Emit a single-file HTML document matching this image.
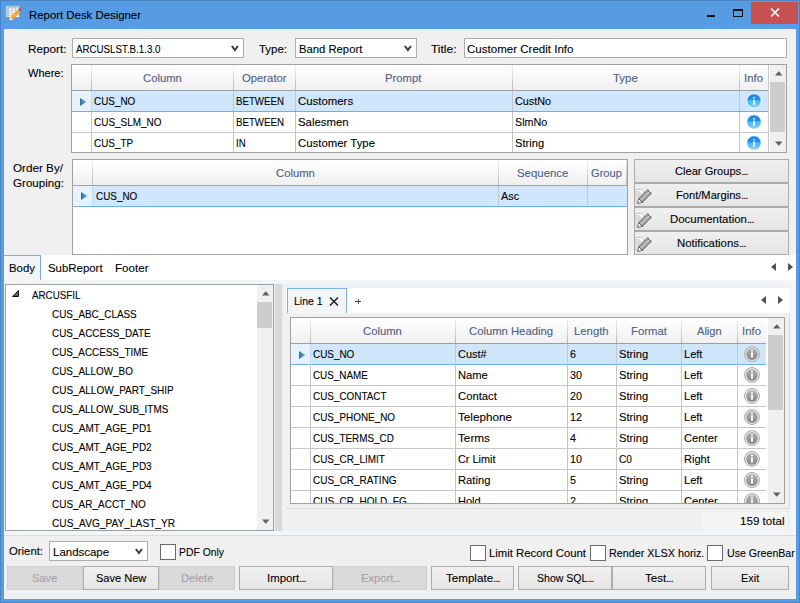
<!DOCTYPE html><html><head><meta charset='utf-8'><style>
html,body{margin:0;padding:0;width:800px;height:603px;overflow:hidden;background:#579ce3}
body div{position:absolute}
svg{position:absolute}
.t{position:absolute;white-space:nowrap;font-family:'Liberation Sans', sans-serif;font-size:11.5px;line-height:12px;transform-origin:0 0;-webkit-text-stroke:0.1px currentColor}
</style></head><body><div style='left:0;top:0;width:800px;height:603px;overflow:hidden'><div style="left:0px;top:0px;width:800px;height:603px;background:#579ce3"></div>
<div style="left:0px;top:0px;width:800px;height:1px;background:#4a86c4"></div>
<div style="left:0px;top:0px;width:1px;height:603px;background:#4a86c4"></div>
<div style="left:799px;top:0px;width:1px;height:603px;background:#4a86c4"></div>
<div style="left:0px;top:602px;width:800px;height:1px;background:#4a86c4"></div>
<div style="left:4px;top:29px;width:792px;height:570px;background:#f0f0f0"></div>
<svg style="position:absolute;left:0px;top:0px" width="24" height="24" viewBox="0 0 24 24">
<rect x="5.5" y="5.5" width="14" height="12" fill="#fff" stroke="#9c9c9c" stroke-width="1"/>
<rect x="6" y="6" width="13" height="1.8" fill="#9fd3f0"/>
<rect x="6" y="6" width="2.2" height="11" fill="#a9d8f2"/>
<path d="M8.5 5.5v12M12 5.5v12M15.5 5.5v12M5.5 8.2h14M5.5 10.6h14M5.5 13h14M5.5 15.4h14" stroke="#b0b0b0" stroke-width="0.6"/>
<path d="M10.2 17.3 L18.2 9.3 L20.6 11.7 L12.6 19.7 Z" fill="#f7a928"/>
<path d="M18.2 9.3 L19.2 8.3 L21.6 10.7 L20.6 11.7 Z" fill="#2f7fc8"/>
<path d="M19.2 8.3 L20.1 7.4 L22.5 9.8 L21.6 10.7 Z" fill="#e0533b"/>
<path d="M10.2 17.3 L12.6 19.7 L9 21 Z" fill="#fff"/>
<path d="M9 21 L9.6 19.4 L10.6 20.4 Z" fill="#777"/>
</svg>
<span id="t0" class="t" style="left:28.50px;transform:scaleX(0.9899);top:9.0px;color:#000;">Report Desk Designer</span>
<div style="left:707px;top:15px;width:8px;height:2px;background:#111"></div>
<div style="left:733px;top:9px;width:10px;height:8px;border:1px solid #111;border-top-width:2px;box-sizing:border-box"></div>
<div style="left:751px;top:2px;width:47px;height:22px;background:#c75050"></div>
<svg style="position:absolute;left:770px;top:8px" width="10" height="9" viewBox="0 0 10 9"><path d="M1 0.5 L9 8.5 M9 0.5 L1 8.5" stroke="#fff" stroke-width="1.6"/></svg>
<span id="t1" class="t" style="left:27.50px;transform:scaleX(1.0207);top:43.0px;color:#000;">Report:</span>
<div style="left:72px;top:38px;width:172px;height:20px;background:#fff;border:1px solid #acacac;box-sizing:border-box"></div>
<span id="t2" class="t" style="left:75.50px;transform:scaleX(0.8474);top:43.0px;color:#000;">ARCUSLST.B.1.3.0</span>
<svg style="position:absolute;left:231px;top:45px" width="8" height="7" viewBox="0 0 8 7"><path d="M0.9 1 L3.9 5 L6.9 1" stroke="#3a3a3a" stroke-width="2" fill="none" stroke-linejoin="miter"/></svg>
<span id="t3" class="t" style="left:258.50px;transform:scaleX(0.9950);top:43.0px;color:#000;">Type:</span>
<div style="left:295px;top:38px;width:122px;height:20px;background:#fff;border:1px solid #acacac;box-sizing:border-box"></div>
<span id="t4" class="t" style="left:298.50px;transform:scaleX(0.9802);top:43.0px;color:#000;">Band Report</span>
<svg style="position:absolute;left:404px;top:45px" width="8" height="7" viewBox="0 0 8 7"><path d="M0.9 1 L3.9 5 L6.9 1" stroke="#3a3a3a" stroke-width="2" fill="none" stroke-linejoin="miter"/></svg>
<span id="t5" class="t" style="left:430.50px;transform:scaleX(1.0408);top:43.0px;color:#000;">Title:</span>
<div style="left:464px;top:38px;width:323px;height:20px;background:#fff;border:1px solid #acacac;box-sizing:border-box"></div>
<span id="t6" class="t" style="left:466.50px;transform:scaleX(1.0037);top:43.0px;color:#000;">Customer Credit Info</span>
<span id="t7" class="t" style="left:27.50px;transform:scaleX(0.9590);top:67.0px;color:#000;">Where:</span>
<div style="left:71px;top:64px;width:716px;height:89px;background:#fff;border:1px solid #a0a0a0;box-sizing:border-box"></div>
<div style="left:72px;top:65px;width:697px;height:25px;background:linear-gradient(#ffffff,#f0f0f0)"></div>
<div style="left:72px;top:90px;width:697px;height:1px;background:#a0a0a0"></div>
<div style="left:91px;top:65px;width:1px;height:25px;background:linear-gradient(#f4f4f4,#b8b8b8)"></div>
<div style="left:233px;top:65px;width:1px;height:25px;background:linear-gradient(#f4f4f4,#b8b8b8)"></div>
<div style="left:295px;top:65px;width:1px;height:25px;background:linear-gradient(#f4f4f4,#b8b8b8)"></div>
<div style="left:512px;top:65px;width:1px;height:25px;background:linear-gradient(#f4f4f4,#b8b8b8)"></div>
<div style="left:739px;top:65px;width:1px;height:25px;background:linear-gradient(#f4f4f4,#b8b8b8)"></div>
<div style="left:768px;top:65px;width:1px;height:25px;background:linear-gradient(#f4f4f4,#b8b8b8)"></div>
<span id="t8" class="t" style="left:142.57px;transform:scaleX(0.9803);top:72px;color:#4d6082;-webkit-text-stroke:0.1px #4d6082">Column</span>
<span id="t9" class="t" style="left:241.70px;transform:scaleX(0.9827);top:72px;color:#4d6082;-webkit-text-stroke:0.1px #4d6082">Operator</span>
<span id="t10" class="t" style="left:385.32px;transform:scaleX(0.9808);top:72px;color:#4d6082;-webkit-text-stroke:0.1px #4d6082">Prompt</span>
<span id="t11" class="t" style="left:613.11px;transform:scaleX(0.9937);top:72px;color:#4d6082;-webkit-text-stroke:0.1px #4d6082">Type</span>
<span id="t12" class="t" style="left:744.02px;transform:scaleX(0.9879);top:72px;color:#4d6082;-webkit-text-stroke:0.1px #4d6082">Info</span>
<div style="left:72px;top:91px;width:19px;height:20px;background:#e6f3fc"></div>
<div style="left:92px;top:91px;width:676px;height:20px;background:#cfe6fc"></div>
<div style="left:72px;top:111px;width:696px;height:1px;background:#6fb0ea"></div>
<svg style="position:absolute;left:80px;top:98px" width="7" height="8" viewBox="0 0 7 8"><defs><linearGradient id="tg8098" x1="0" x2="1"><stop offset="0" stop-color="#2a6f9e"/><stop offset="1" stop-color="#6ab8e4"/></linearGradient></defs><path d="M0 0 L6.5 4 L0 8 Z" fill="url(#tg8098)"/></svg>
<div style="left:91px;top:91px;width:1px;height:20px;background:#c5ddf0"></div>
<div style="left:233px;top:91px;width:1px;height:20px;background:#c6c6c6"></div>
<div style="left:295px;top:91px;width:1px;height:20px;background:#c6c6c6"></div>
<div style="left:512px;top:91px;width:1px;height:20px;background:#c6c6c6"></div>
<div style="left:739px;top:91px;width:1px;height:20px;background:#c6c6c6"></div>
<span id="t13" class="t" style="left:93.50px;transform:scaleX(0.8610);top:95.0px;color:#000;">CUS_NO</span>
<span id="t14" class="t" style="left:235.50px;transform:scaleX(0.8419);top:95.0px;color:#000;">BETWEEN</span>
<span id="t15" class="t" style="left:297.50px;transform:scaleX(0.9910);top:95.0px;color:#000;">Customers</span>
<span id="t16" class="t" style="left:514.50px;transform:scaleX(0.9411);top:95.0px;color:#000;">CustNo</span>
<svg style="position:absolute;left:746px;top:93px" width="16" height="16" viewBox="0 0 16 16"><defs><linearGradient id="ib101" x1="0" y1="0" x2="0" y2="1"><stop offset="0" stop-color="#1b80ec"/><stop offset="0.4" stop-color="#2590f2"/><stop offset="0.5" stop-color="#3ec2ff"/><stop offset="0.7" stop-color="#62bff8"/><stop offset="1" stop-color="#a6d2f6"/></linearGradient></defs>
<circle cx="8" cy="8" r="7.3" fill="url(#ib101)" stroke="#fff" stroke-width="0.9"/>
<rect x="7.2" y="4" width="1.6" height="1.5" fill="#fff"/><rect x="7.2" y="6.6" width="1.6" height="5.2" fill="#fff"/></svg>
<div style="left:72px;top:132px;width:696px;height:1px;background:#c6c6c6"></div>
<div style="left:91px;top:112px;width:1px;height:21px;background:#c6c6c6"></div>
<div style="left:233px;top:112px;width:1px;height:21px;background:#c6c6c6"></div>
<div style="left:295px;top:112px;width:1px;height:21px;background:#c6c6c6"></div>
<div style="left:512px;top:112px;width:1px;height:21px;background:#c6c6c6"></div>
<div style="left:739px;top:112px;width:1px;height:21px;background:#c6c6c6"></div>
<span id="t17" class="t" style="left:93.50px;transform:scaleX(0.8655);top:116.0px;color:#000;">CUS_SLM_NO</span>
<span id="t18" class="t" style="left:235.50px;transform:scaleX(0.8419);top:116.0px;color:#000;">BETWEEN</span>
<span id="t19" class="t" style="left:297.50px;transform:scaleX(0.9910);top:116.0px;color:#000;">Salesmen</span>
<span id="t20" class="t" style="left:514.50px;transform:scaleX(0.9360);top:116.0px;color:#000;">SlmNo</span>
<svg style="position:absolute;left:746px;top:114px" width="16" height="16" viewBox="0 0 16 16"><defs><linearGradient id="ib122" x1="0" y1="0" x2="0" y2="1"><stop offset="0" stop-color="#1b80ec"/><stop offset="0.4" stop-color="#2590f2"/><stop offset="0.5" stop-color="#3ec2ff"/><stop offset="0.7" stop-color="#62bff8"/><stop offset="1" stop-color="#a6d2f6"/></linearGradient></defs>
<circle cx="8" cy="8" r="7.3" fill="url(#ib122)" stroke="#fff" stroke-width="0.9"/>
<rect x="7.2" y="4" width="1.6" height="1.5" fill="#fff"/><rect x="7.2" y="6.6" width="1.6" height="5.2" fill="#fff"/></svg>
<div style="left:91px;top:133px;width:1px;height:19px;background:#c6c6c6"></div>
<div style="left:233px;top:133px;width:1px;height:19px;background:#c6c6c6"></div>
<div style="left:295px;top:133px;width:1px;height:19px;background:#c6c6c6"></div>
<div style="left:512px;top:133px;width:1px;height:19px;background:#c6c6c6"></div>
<div style="left:739px;top:133px;width:1px;height:19px;background:#c6c6c6"></div>
<span id="t21" class="t" style="left:93.50px;transform:scaleX(0.8622);top:137.0px;color:#000;">CUS_TP</span>
<span id="t22" class="t" style="left:235.50px;transform:scaleX(0.8421);top:137.0px;color:#000;">IN</span>
<span id="t23" class="t" style="left:297.50px;transform:scaleX(0.9906);top:137.0px;color:#000;">Customer Type</span>
<span id="t24" class="t" style="left:514.50px;transform:scaleX(0.9725);top:137.0px;color:#000;">String</span>
<svg style="position:absolute;left:746px;top:135px" width="16" height="16" viewBox="0 0 16 16"><defs><linearGradient id="ib143" x1="0" y1="0" x2="0" y2="1"><stop offset="0" stop-color="#1b80ec"/><stop offset="0.4" stop-color="#2590f2"/><stop offset="0.5" stop-color="#3ec2ff"/><stop offset="0.7" stop-color="#62bff8"/><stop offset="1" stop-color="#a6d2f6"/></linearGradient></defs>
<circle cx="8" cy="8" r="7.3" fill="url(#ib143)" stroke="#fff" stroke-width="0.9"/>
<rect x="7.2" y="4" width="1.6" height="1.5" fill="#fff"/><rect x="7.2" y="6.6" width="1.6" height="5.2" fill="#fff"/></svg>
<div style="left:768px;top:65px;width:1px;height:87px;background:#c8c8c8"></div>
<div style="left:769px;top:65px;width:1px;height:87px;background:#fff"></div>
<div style="left:770px;top:65px;width:16px;height:87px;background:#f0f0f0"></div>
<div style="left:770px;top:82px;width:15px;height:50px;background:#cdcdcd"></div>
<svg style="position:absolute;left:775px;top:71px" width="8" height="5" viewBox="0 0 8 5"><path d="M0 4.5 L3.75 0.3 L7.5 4.5Z" fill="#606060"/></svg>
<svg style="position:absolute;left:775px;top:141px" width="8" height="5" viewBox="0 0 8 5"><path d="M0 0.5 L3.75 4.7 L7.5 0.5Z" fill="#606060"/></svg>
<span id="t25" class="t" style="left:12.50px;transform:scaleX(1.0159);top:162.0px;color:#000;">Order By/</span>
<span id="t26" class="t" style="left:12.50px;transform:scaleX(1.0096);top:177.0px;color:#000;">Grouping:</span>
<div style="left:72px;top:159px;width:556px;height:96px;background:#fff;border:1px solid #a0a0a0;box-sizing:border-box"></div>
<div style="left:73px;top:160px;width:554px;height:25px;background:linear-gradient(#ffffff,#f0f0f0)"></div>
<div style="left:73px;top:185px;width:554px;height:1px;background:#a0a0a0"></div>
<div style="left:92px;top:160px;width:1px;height:25px;background:linear-gradient(#f4f4f4,#b8b8b8)"></div>
<div style="left:498px;top:160px;width:1px;height:25px;background:linear-gradient(#f4f4f4,#b8b8b8)"></div>
<div style="left:587px;top:160px;width:1px;height:25px;background:linear-gradient(#f4f4f4,#b8b8b8)"></div>
<div style="left:626px;top:160px;width:1px;height:25px;background:linear-gradient(#f4f4f4,#b8b8b8)"></div>
<span id="t27" class="t" style="left:275.57px;transform:scaleX(0.9803);top:167px;color:#4d6082;-webkit-text-stroke:0.1px #4d6082">Column</span>
<span id="t28" class="t" style="left:516.82px;transform:scaleX(0.9914);top:167px;color:#4d6082;-webkit-text-stroke:0.1px #4d6082">Sequence</span>
<span id="t29" class="t" style="left:591.03px;transform:scaleX(0.9681);top:167px;color:#4d6082;-webkit-text-stroke:0.1px #4d6082">Group</span>
<div style="left:73px;top:186px;width:19px;height:20px;background:#e6f3fc"></div>
<div style="left:93px;top:186px;width:534px;height:20px;background:#cfe6fc"></div>
<div style="left:73px;top:206px;width:554px;height:1px;background:#6fb0ea"></div>
<div style="left:92px;top:186px;width:1px;height:20px;background:#c5ddf0"></div>
<div style="left:498px;top:186px;width:1px;height:20px;background:#c6c6c6"></div>
<div style="left:587px;top:186px;width:1px;height:20px;background:#c6c6c6"></div>
<svg style="position:absolute;left:81px;top:192px" width="7" height="8" viewBox="0 0 7 8"><defs><linearGradient id="tg81192" x1="0" x2="1"><stop offset="0" stop-color="#2a6f9e"/><stop offset="1" stop-color="#6ab8e4"/></linearGradient></defs><path d="M0 0 L6.5 4 L0 8 Z" fill="url(#tg81192)"/></svg>
<span id="t30" class="t" style="left:95.50px;transform:scaleX(0.8610);top:190.0px;color:#000;">CUS_NO</span>
<span id="t31" class="t" style="left:500.50px;transform:scaleX(0.9472);top:190.0px;color:#000;">Asc</span>
<div style="left:634px;top:159px;width:155px;height:24px;background:linear-gradient(#f0f0f0,#e5e5e5);border:1px solid #acacac;box-sizing:border-box"></div>
<span id="t32" class="t" style="left:675.25px;transform:scaleX(0.9669);top:165px;color:#000">Clear Groups<span style="letter-spacing:-1px">...</span></span>
<div style="left:634px;top:183px;width:155px;height:24px;background:linear-gradient(#f0f0f0,#e5e5e5);border:1px solid #acacac;box-sizing:border-box"></div>
<span id="t33" class="t" style="left:675.84px;transform:scaleX(0.9676);top:189px;color:#000">Font/Margins<span style="letter-spacing:-1px">...</span></span>
<div style="left:634px;top:207px;width:155px;height:24px;background:linear-gradient(#f0f0f0,#e5e5e5);border:1px solid #acacac;box-sizing:border-box"></div>
<span id="t34" class="t" style="left:669.78px;transform:scaleX(0.9939);top:213px;color:#000">Documentation<span style="letter-spacing:-1px">...</span></span>
<div style="left:634px;top:231px;width:155px;height:24px;background:linear-gradient(#f0f0f0,#e5e5e5);border:1px solid #acacac;box-sizing:border-box"></div>
<span id="t35" class="t" style="left:677.26px;transform:scaleX(0.9890);top:237px;color:#000">Notifications<span style="letter-spacing:-1px">...</span></span>
<svg style="position:absolute;left:634px;top:188px" width="18" height="17" viewBox="0 0 18 17">
<path d="M2 1.5h5.5l2.5 2.5v9.5H2z" fill="#fff" stroke="#b4b4b4" stroke-width="0.8"/>
<path d="M3.2 4h3M3.2 6h4.5M3.2 8h3.5M3.2 10h2.5" stroke="#9a9a9a" stroke-width="0.8"/>
<path d="M4.7 10.7 L13.7 1.7 L17.3 5.3 L8.3 14.3 Z" fill="#a8a8a8" stroke="#5a5a5a" stroke-width="1"/>
<path d="M6.5 12.5 L15.5 3.5" stroke="#d4d4d4" stroke-width="1"/>
<path d="M4.7 10.7 L8.3 14.3 L3.6 15.6 Z" fill="#fff" stroke="#5a5a5a" stroke-width="0.9"/>
</svg>
<svg style="position:absolute;left:634px;top:212px" width="18" height="17" viewBox="0 0 18 17">
<path d="M2 1.5h5.5l2.5 2.5v9.5H2z" fill="#fff" stroke="#b4b4b4" stroke-width="0.8"/>
<path d="M3.2 4h3M3.2 6h4.5M3.2 8h3.5M3.2 10h2.5" stroke="#9a9a9a" stroke-width="0.8"/>
<path d="M4.7 10.7 L13.7 1.7 L17.3 5.3 L8.3 14.3 Z" fill="#a8a8a8" stroke="#5a5a5a" stroke-width="1"/>
<path d="M6.5 12.5 L15.5 3.5" stroke="#d4d4d4" stroke-width="1"/>
<path d="M4.7 10.7 L8.3 14.3 L3.6 15.6 Z" fill="#fff" stroke="#5a5a5a" stroke-width="0.9"/>
</svg>
<svg style="position:absolute;left:634px;top:236px" width="18" height="17" viewBox="0 0 18 17">
<path d="M2 1.5h5.5l2.5 2.5v9.5H2z" fill="#fff" stroke="#b4b4b4" stroke-width="0.8"/>
<path d="M3.2 4h3M3.2 6h4.5M3.2 8h3.5M3.2 10h2.5" stroke="#9a9a9a" stroke-width="0.8"/>
<path d="M4.7 10.7 L13.7 1.7 L17.3 5.3 L8.3 14.3 Z" fill="#a8a8a8" stroke="#5a5a5a" stroke-width="1"/>
<path d="M6.5 12.5 L15.5 3.5" stroke="#d4d4d4" stroke-width="1"/>
<path d="M4.7 10.7 L8.3 14.3 L3.6 15.6 Z" fill="#fff" stroke="#5a5a5a" stroke-width="0.9"/>
</svg>
<div style="left:4px;top:255px;width:792px;height:25px;background:#fff"></div>
<div style="left:4px;top:255px;width:37px;height:26px;background:#f4f5f7;border-top:1px solid #78b0e8;border-right:1px solid #78b0e8;box-sizing:border-box"></div>
<span id="t36" class="t" style="left:8.50px;transform:scaleX(0.9917);top:262.0px;color:#000;">Body</span>
<span id="t37" class="t" style="left:47.50px;transform:scaleX(0.9930);top:262.0px;color:#000;">SubReport</span>
<span id="t38" class="t" style="left:114.50px;transform:scaleX(1.0105);top:262.0px;color:#000;">Footer</span>
<svg style="position:absolute;left:771px;top:263px" width="5" height="8" viewBox="0 0 5 8"><path d="M5 0 L0 4 L5 8Z" fill="#505050"/></svg>
<svg style="position:absolute;left:788px;top:263px" width="5" height="8" viewBox="0 0 5 8"><path d="M0 0 L5 4 L0 8Z" fill="#505050"/></svg>
<div style="left:4px;top:531px;width:792px;height:4px;background:#f4f5f7"></div>
<div style="left:4px;top:280px;width:792px;height:4px;background:#f4f5f7"></div>
<div style="left:790px;top:280px;width:6px;height:255px;background:#f4f5f7"></div>
<div style="left:4px;top:280px;width:1px;height:255px;background:#f4f5f7"></div>
<div style="left:4px;top:535px;width:792px;height:1px;background:#dcdcdc"></div>
<div style="left:5px;top:284px;width:269px;height:247px;background:#fff;border:1px solid #a0a0a0;box-sizing:border-box"></div>
<div style="left:256px;top:285px;width:1px;height:245px;background:#fff"></div>
<div style="left:257px;top:285px;width:16px;height:245px;background:#f0f0f0"></div>
<div style="left:257px;top:302px;width:15px;height:26px;background:#cdcdcd"></div>
<svg style="position:absolute;left:262px;top:291px" width="8" height="5" viewBox="0 0 8 5"><path d="M0 4.5 L3.75 0.3 L7.5 4.5Z" fill="#606060"/></svg>
<svg style="position:absolute;left:262px;top:519px" width="8" height="5" viewBox="0 0 8 5"><path d="M0 0.5 L3.75 4.7 L7.5 0.5Z" fill="#606060"/></svg>
<svg style="position:absolute;left:11px;top:289px" width="9" height="9" viewBox="0 0 9 9"><path d="M7.5 1.5 L7.5 7.5 L1.5 7.5Z" fill="#606060" stroke="#111" stroke-width="1" stroke-linejoin="miter"/></svg>
<span id="t39" class="t" style="left:31.50px;transform:scaleX(0.8527);top:289.0px;color:#000;">ARCUSFIL</span>
<span id="t40" class="t" style="left:51.50px;transform:scaleX(0.8606);top:308.0px;color:#000;">CUS_ABC_CLASS</span>
<span id="t41" class="t" style="left:51.50px;transform:scaleX(0.8643);top:327.0px;color:#000;">CUS_ACCESS_DATE</span>
<span id="t42" class="t" style="left:51.50px;transform:scaleX(0.8584);top:346.0px;color:#000;">CUS_ACCESS_TIME</span>
<span id="t43" class="t" style="left:51.50px;transform:scaleX(0.8615);top:365.0px;color:#000;">CUS_ALLOW_BO</span>
<span id="t44" class="t" style="left:51.50px;transform:scaleX(0.8680);top:384.0px;color:#000;">CUS_ALLOW_PART_SHIP</span>
<span id="t45" class="t" style="left:51.50px;transform:scaleX(0.8623);top:403.0px;color:#000;">CUS_ALLOW_SUB_ITMS</span>
<span id="t46" class="t" style="left:51.50px;transform:scaleX(0.8714);top:422.0px;color:#000;">CUS_AMT_AGE_PD1</span>
<span id="t47" class="t" style="left:51.50px;transform:scaleX(0.8714);top:441.0px;color:#000;">CUS_AMT_AGE_PD2</span>
<span id="t48" class="t" style="left:51.50px;transform:scaleX(0.8714);top:460.0px;color:#000;">CUS_AMT_AGE_PD3</span>
<span id="t49" class="t" style="left:51.50px;transform:scaleX(0.8714);top:479.0px;color:#000;">CUS_AMT_AGE_PD4</span>
<span id="t50" class="t" style="left:51.50px;transform:scaleX(0.8675);top:498.0px;color:#000;">CUS_AR_ACCT_NO</span>
<span id="t51" class="t" style="left:51.50px;transform:scaleX(0.8838);top:517.0px;color:#000;">CUS_AVG_PAY_LAST_YR</span>
<div style="left:275px;top:284px;width:7px;height:247px;background:#d9d9d9"></div>
<div style="left:286px;top:288px;width:504px;height:25px;background:#fff"></div>
<div style="left:287px;top:288px;width:60px;height:26px;background:#f4f5f7;border:1px solid #78b0e8;border-bottom:none;box-sizing:border-box"></div>
<span id="t52" class="t" style="left:293.50px;transform:scaleX(0.9093);top:295.0px;color:#000;">Line 1</span>
<svg style="position:absolute;left:329px;top:296.6px" width="10" height="9" viewBox="0 0 10 9"><path d="M1 0.5 L9 8.5 M9 0.5 L1 8.5" stroke="#222" stroke-width="1.5"/></svg>
<div style="left:355px;top:301px;width:6px;height:1px;background:#333"></div>
<div style="left:357.5px;top:299px;width:1px;height:5px;background:#555"></div>
<svg style="position:absolute;left:761px;top:296px" width="5" height="8" viewBox="0 0 5 8"><path d="M5 0 L0 4 L5 8Z" fill="#505050"/></svg>
<svg style="position:absolute;left:778px;top:296px" width="5" height="8" viewBox="0 0 5 8"><path d="M0 0 L5 4 L0 8Z" fill="#505050"/></svg>
<div style="left:286px;top:313px;width:504px;height:196px;background:#f0f0f0;border-right:1px solid #dcdcdc;border-bottom:1px solid #dcdcdc;box-sizing:border-box"></div>
<div style="left:290px;top:317px;width:495px;height:187px;background:#fff;border:1px solid #a0a0a0;box-sizing:border-box"></div>
<div style="left:291px;top:318px;width:476px;height:25px;background:linear-gradient(#ffffff,#f0f0f0)"></div>
<div style="left:291px;top:343px;width:476px;height:1px;background:#a0a0a0"></div>
<div style="left:310px;top:318px;width:1px;height:25px;background:linear-gradient(#f4f4f4,#b8b8b8)"></div>
<div style="left:455px;top:318px;width:1px;height:25px;background:linear-gradient(#f4f4f4,#b8b8b8)"></div>
<div style="left:567px;top:318px;width:1px;height:25px;background:linear-gradient(#f4f4f4,#b8b8b8)"></div>
<div style="left:616px;top:318px;width:1px;height:25px;background:linear-gradient(#f4f4f4,#b8b8b8)"></div>
<div style="left:681px;top:318px;width:1px;height:25px;background:linear-gradient(#f4f4f4,#b8b8b8)"></div>
<div style="left:737px;top:318px;width:1px;height:25px;background:linear-gradient(#f4f4f4,#b8b8b8)"></div>
<div style="left:766px;top:318px;width:1px;height:25px;background:linear-gradient(#f4f4f4,#b8b8b8)"></div>
<span id="t53" class="t" style="left:363.07px;transform:scaleX(0.9803);top:325px;color:#4d6082;-webkit-text-stroke:0.1px #4d6082">Column</span>
<span id="t54" class="t" style="left:469.01px;transform:scaleX(0.9803);top:325px;color:#4d6082;-webkit-text-stroke:0.1px #4d6082">Column Heading</span>
<span id="t55" class="t" style="left:574.17px;transform:scaleX(0.9851);top:325px;color:#4d6082;-webkit-text-stroke:0.1px #4d6082">Length</span>
<span id="t56" class="t" style="left:630.59px;transform:scaleX(0.9835);top:325px;color:#4d6082;-webkit-text-stroke:0.1px #4d6082">Format</span>
<span id="t57" class="t" style="left:696.66px;transform:scaleX(0.9646);top:325px;color:#4d6082;-webkit-text-stroke:0.1px #4d6082">Align</span>
<span id="t58" class="t" style="left:742.02px;transform:scaleX(0.9879);top:325px;color:#4d6082;-webkit-text-stroke:0.1px #4d6082">Info</span>
<div style="left:291px;top:344px;width:476px;height:159px;overflow:hidden">
<div style="left:0;top:0px;width:19px;height:20px;background:#e6f3fc"></div>
<div style="left:20px;top:0px;width:456px;height:20px;background:#cfe6fc"></div>
<div style="left:0;top:20px;width:476px;height:1px;background:#6fb0ea"></div>
<svg style="position:absolute;left:8px;top:7px" width="7" height="8" viewBox="0 0 7 8"><defs><linearGradient id="tgl" x1="0" x2="1"><stop offset="0" stop-color="#2a6f9e"/><stop offset="1" stop-color="#6ab8e4"/></linearGradient></defs><path d="M0 0 L6.5 4 L0 8 Z" fill="url(#tgl)"/></svg>
<div style="left:19px;top:0px;width:1px;height:21px;background:#c5ddf0"></div>
<div style="left:164px;top:0px;width:1px;height:21px;background:#c6c6c6"></div>
<div style="left:276px;top:0px;width:1px;height:21px;background:#c6c6c6"></div>
<div style="left:325px;top:0px;width:1px;height:21px;background:#c6c6c6"></div>
<div style="left:390px;top:0px;width:1px;height:21px;background:#c6c6c6"></div>
<div style="left:446px;top:0px;width:1px;height:21px;background:#c6c6c6"></div>
<span id="t59" class="t" style="left:21.50px;transform:scaleX(0.8610);top:4px;color:#000">CUS_NO</span>
<span id="t60" class="t" style="left:166.50px;transform:scaleX(0.9521);top:4px;color:#000">Cust#</span>
<span id="t61" class="t" style="left:278.50px;transform:scaleX(0.9376);top:4px;color:#000">6</span>
<span id="t62" class="t" style="left:327.50px;transform:scaleX(0.9725);top:4px;color:#000">String</span>
<span id="t63" class="t" style="left:392.50px;transform:scaleX(0.9586);top:4px;color:#000">Left</span>
<svg style="position:absolute;left:453px;top:2px" width="16" height="16" viewBox="0 0 16 16"><defs><linearGradient id="ig0" x1="0" y1="0" x2="0" y2="1"><stop offset="0" stop-color="#b4b4b4"/><stop offset="1" stop-color="#858585"/></linearGradient></defs>
<circle cx="8" cy="8" r="7.4" fill="#f4f4f4" stroke="#a0a0a0" stroke-width="1"/>
<circle cx="8" cy="8" r="5.9" fill="url(#ig0)"/>
<rect x="7.1" y="3.6" width="1.8" height="1.7" fill="#fff"/><rect x="7.1" y="6.3" width="1.8" height="5.5" fill="#fff"/></svg>
<div style="left:0;top:41px;width:476px;height:1px;background:#c6c6c6"></div>
<div style="left:19px;top:21px;width:1px;height:21px;background:#c6c6c6"></div>
<div style="left:164px;top:21px;width:1px;height:21px;background:#c6c6c6"></div>
<div style="left:276px;top:21px;width:1px;height:21px;background:#c6c6c6"></div>
<div style="left:325px;top:21px;width:1px;height:21px;background:#c6c6c6"></div>
<div style="left:390px;top:21px;width:1px;height:21px;background:#c6c6c6"></div>
<div style="left:446px;top:21px;width:1px;height:21px;background:#c6c6c6"></div>
<span id="t64" class="t" style="left:21.50px;transform:scaleX(0.8563);top:25px;color:#000">CUS_NAME</span>
<span id="t65" class="t" style="left:166.50px;transform:scaleX(0.9696);top:25px;color:#000">Name</span>
<span id="t66" class="t" style="left:278.50px;transform:scaleX(0.9387);top:25px;color:#000">30</span>
<span id="t67" class="t" style="left:327.50px;transform:scaleX(0.9725);top:25px;color:#000">String</span>
<span id="t68" class="t" style="left:392.50px;transform:scaleX(0.9586);top:25px;color:#000">Left</span>
<svg style="position:absolute;left:453px;top:23px" width="16" height="16" viewBox="0 0 16 16"><defs><linearGradient id="ig1" x1="0" y1="0" x2="0" y2="1"><stop offset="0" stop-color="#b4b4b4"/><stop offset="1" stop-color="#858585"/></linearGradient></defs>
<circle cx="8" cy="8" r="7.4" fill="#f4f4f4" stroke="#a0a0a0" stroke-width="1"/>
<circle cx="8" cy="8" r="5.9" fill="url(#ig1)"/>
<rect x="7.1" y="3.6" width="1.8" height="1.7" fill="#fff"/><rect x="7.1" y="6.3" width="1.8" height="5.5" fill="#fff"/></svg>
<div style="left:0;top:62px;width:476px;height:1px;background:#c6c6c6"></div>
<div style="left:19px;top:42px;width:1px;height:21px;background:#c6c6c6"></div>
<div style="left:164px;top:42px;width:1px;height:21px;background:#c6c6c6"></div>
<div style="left:276px;top:42px;width:1px;height:21px;background:#c6c6c6"></div>
<div style="left:325px;top:42px;width:1px;height:21px;background:#c6c6c6"></div>
<div style="left:390px;top:42px;width:1px;height:21px;background:#c6c6c6"></div>
<div style="left:446px;top:42px;width:1px;height:21px;background:#c6c6c6"></div>
<span id="t69" class="t" style="left:21.50px;transform:scaleX(0.8612);top:46px;color:#000">CUS_CONTACT</span>
<span id="t70" class="t" style="left:166.50px;transform:scaleX(0.9805);top:46px;color:#000">Contact</span>
<span id="t71" class="t" style="left:278.50px;transform:scaleX(0.9387);top:46px;color:#000">20</span>
<span id="t72" class="t" style="left:327.50px;transform:scaleX(0.9725);top:46px;color:#000">String</span>
<span id="t73" class="t" style="left:392.50px;transform:scaleX(0.9586);top:46px;color:#000">Left</span>
<svg style="position:absolute;left:453px;top:44px" width="16" height="16" viewBox="0 0 16 16"><defs><linearGradient id="ig2" x1="0" y1="0" x2="0" y2="1"><stop offset="0" stop-color="#b4b4b4"/><stop offset="1" stop-color="#858585"/></linearGradient></defs>
<circle cx="8" cy="8" r="7.4" fill="#f4f4f4" stroke="#a0a0a0" stroke-width="1"/>
<circle cx="8" cy="8" r="5.9" fill="url(#ig2)"/>
<rect x="7.1" y="3.6" width="1.8" height="1.7" fill="#fff"/><rect x="7.1" y="6.3" width="1.8" height="5.5" fill="#fff"/></svg>
<div style="left:0;top:83px;width:476px;height:1px;background:#c6c6c6"></div>
<div style="left:19px;top:63px;width:1px;height:21px;background:#c6c6c6"></div>
<div style="left:164px;top:63px;width:1px;height:21px;background:#c6c6c6"></div>
<div style="left:276px;top:63px;width:1px;height:21px;background:#c6c6c6"></div>
<div style="left:325px;top:63px;width:1px;height:21px;background:#c6c6c6"></div>
<div style="left:390px;top:63px;width:1px;height:21px;background:#c6c6c6"></div>
<div style="left:446px;top:63px;width:1px;height:21px;background:#c6c6c6"></div>
<span id="t74" class="t" style="left:21.50px;transform:scaleX(0.8613);top:67px;color:#000">CUS_PHONE_NO</span>
<span id="t75" class="t" style="left:166.50px;transform:scaleX(1.0186);top:67px;color:#000">Telephone</span>
<span id="t76" class="t" style="left:278.50px;transform:scaleX(0.9387);top:67px;color:#000">12</span>
<span id="t77" class="t" style="left:327.50px;transform:scaleX(0.9725);top:67px;color:#000">String</span>
<span id="t78" class="t" style="left:392.50px;transform:scaleX(0.9586);top:67px;color:#000">Left</span>
<svg style="position:absolute;left:453px;top:65px" width="16" height="16" viewBox="0 0 16 16"><defs><linearGradient id="ig3" x1="0" y1="0" x2="0" y2="1"><stop offset="0" stop-color="#b4b4b4"/><stop offset="1" stop-color="#858585"/></linearGradient></defs>
<circle cx="8" cy="8" r="7.4" fill="#f4f4f4" stroke="#a0a0a0" stroke-width="1"/>
<circle cx="8" cy="8" r="5.9" fill="url(#ig3)"/>
<rect x="7.1" y="3.6" width="1.8" height="1.7" fill="#fff"/><rect x="7.1" y="6.3" width="1.8" height="5.5" fill="#fff"/></svg>
<div style="left:0;top:104px;width:476px;height:1px;background:#c6c6c6"></div>
<div style="left:19px;top:84px;width:1px;height:21px;background:#c6c6c6"></div>
<div style="left:164px;top:84px;width:1px;height:21px;background:#c6c6c6"></div>
<div style="left:276px;top:84px;width:1px;height:21px;background:#c6c6c6"></div>
<div style="left:325px;top:84px;width:1px;height:21px;background:#c6c6c6"></div>
<div style="left:390px;top:84px;width:1px;height:21px;background:#c6c6c6"></div>
<div style="left:446px;top:84px;width:1px;height:21px;background:#c6c6c6"></div>
<span id="t79" class="t" style="left:21.50px;transform:scaleX(0.8615);top:88px;color:#000">CUS_TERMS_CD</span>
<span id="t80" class="t" style="left:166.50px;transform:scaleX(1.0192);top:88px;color:#000">Terms</span>
<span id="t81" class="t" style="left:278.50px;transform:scaleX(0.9376);top:88px;color:#000">4</span>
<span id="t82" class="t" style="left:327.50px;transform:scaleX(0.9725);top:88px;color:#000">String</span>
<span id="t83" class="t" style="left:392.50px;transform:scaleX(0.9748);top:88px;color:#000">Center</span>
<svg style="position:absolute;left:453px;top:86px" width="16" height="16" viewBox="0 0 16 16"><defs><linearGradient id="ig4" x1="0" y1="0" x2="0" y2="1"><stop offset="0" stop-color="#b4b4b4"/><stop offset="1" stop-color="#858585"/></linearGradient></defs>
<circle cx="8" cy="8" r="7.4" fill="#f4f4f4" stroke="#a0a0a0" stroke-width="1"/>
<circle cx="8" cy="8" r="5.9" fill="url(#ig4)"/>
<rect x="7.1" y="3.6" width="1.8" height="1.7" fill="#fff"/><rect x="7.1" y="6.3" width="1.8" height="5.5" fill="#fff"/></svg>
<div style="left:0;top:125px;width:476px;height:1px;background:#c6c6c6"></div>
<div style="left:19px;top:105px;width:1px;height:21px;background:#c6c6c6"></div>
<div style="left:164px;top:105px;width:1px;height:21px;background:#c6c6c6"></div>
<div style="left:276px;top:105px;width:1px;height:21px;background:#c6c6c6"></div>
<div style="left:325px;top:105px;width:1px;height:21px;background:#c6c6c6"></div>
<div style="left:390px;top:105px;width:1px;height:21px;background:#c6c6c6"></div>
<div style="left:446px;top:105px;width:1px;height:21px;background:#c6c6c6"></div>
<span id="t84" class="t" style="left:21.50px;transform:scaleX(0.8640);top:109px;color:#000">CUS_CR_LIMIT</span>
<span id="t85" class="t" style="left:166.50px;transform:scaleX(0.9457);top:109px;color:#000">Cr Limit</span>
<span id="t86" class="t" style="left:278.50px;transform:scaleX(0.9387);top:109px;color:#000">10</span>
<span id="t87" class="t" style="left:327.50px;transform:scaleX(0.8842);top:109px;color:#000">C0</span>
<span id="t88" class="t" style="left:392.50px;transform:scaleX(0.9627);top:109px;color:#000">Right</span>
<svg style="position:absolute;left:453px;top:107px" width="16" height="16" viewBox="0 0 16 16"><defs><linearGradient id="ig5" x1="0" y1="0" x2="0" y2="1"><stop offset="0" stop-color="#b4b4b4"/><stop offset="1" stop-color="#858585"/></linearGradient></defs>
<circle cx="8" cy="8" r="7.4" fill="#f4f4f4" stroke="#a0a0a0" stroke-width="1"/>
<circle cx="8" cy="8" r="5.9" fill="url(#ig5)"/>
<rect x="7.1" y="3.6" width="1.8" height="1.7" fill="#fff"/><rect x="7.1" y="6.3" width="1.8" height="5.5" fill="#fff"/></svg>
<div style="left:0;top:146px;width:476px;height:1px;background:#c6c6c6"></div>
<div style="left:19px;top:126px;width:1px;height:21px;background:#c6c6c6"></div>
<div style="left:164px;top:126px;width:1px;height:21px;background:#c6c6c6"></div>
<div style="left:276px;top:126px;width:1px;height:21px;background:#c6c6c6"></div>
<div style="left:325px;top:126px;width:1px;height:21px;background:#c6c6c6"></div>
<div style="left:390px;top:126px;width:1px;height:21px;background:#c6c6c6"></div>
<div style="left:446px;top:126px;width:1px;height:21px;background:#c6c6c6"></div>
<span id="t89" class="t" style="left:21.50px;transform:scaleX(0.8685);top:130px;color:#000">CUS_CR_RATING</span>
<span id="t90" class="t" style="left:166.50px;transform:scaleX(0.9734);top:130px;color:#000">Rating</span>
<span id="t91" class="t" style="left:278.50px;transform:scaleX(0.9376);top:130px;color:#000">5</span>
<span id="t92" class="t" style="left:327.50px;transform:scaleX(0.9725);top:130px;color:#000">String</span>
<span id="t93" class="t" style="left:392.50px;transform:scaleX(0.9586);top:130px;color:#000">Left</span>
<svg style="position:absolute;left:453px;top:128px" width="16" height="16" viewBox="0 0 16 16"><defs><linearGradient id="ig6" x1="0" y1="0" x2="0" y2="1"><stop offset="0" stop-color="#b4b4b4"/><stop offset="1" stop-color="#858585"/></linearGradient></defs>
<circle cx="8" cy="8" r="7.4" fill="#f4f4f4" stroke="#a0a0a0" stroke-width="1"/>
<circle cx="8" cy="8" r="5.9" fill="url(#ig6)"/>
<rect x="7.1" y="3.6" width="1.8" height="1.7" fill="#fff"/><rect x="7.1" y="6.3" width="1.8" height="5.5" fill="#fff"/></svg>
<div style="left:0;top:167px;width:476px;height:1px;background:#c6c6c6"></div>
<div style="left:19px;top:147px;width:1px;height:21px;background:#c6c6c6"></div>
<div style="left:164px;top:147px;width:1px;height:21px;background:#c6c6c6"></div>
<div style="left:276px;top:147px;width:1px;height:21px;background:#c6c6c6"></div>
<div style="left:325px;top:147px;width:1px;height:21px;background:#c6c6c6"></div>
<div style="left:390px;top:147px;width:1px;height:21px;background:#c6c6c6"></div>
<div style="left:446px;top:147px;width:1px;height:21px;background:#c6c6c6"></div>
<span id="t94" class="t" style="left:21.50px;transform:scaleX(0.8675);top:151px;color:#000">CUS_CR_HOLD_FG</span>
<span id="t95" class="t" style="left:166.50px;transform:scaleX(0.9556);top:151px;color:#000">Hold</span>
<span id="t96" class="t" style="left:278.50px;transform:scaleX(0.9376);top:151px;color:#000">2</span>
<span id="t97" class="t" style="left:327.50px;transform:scaleX(0.9725);top:151px;color:#000">String</span>
<span id="t98" class="t" style="left:392.50px;transform:scaleX(0.9748);top:151px;color:#000">Center</span>
<svg style="position:absolute;left:453px;top:149px" width="16" height="16" viewBox="0 0 16 16"><defs><linearGradient id="ig7" x1="0" y1="0" x2="0" y2="1"><stop offset="0" stop-color="#b4b4b4"/><stop offset="1" stop-color="#858585"/></linearGradient></defs>
<circle cx="8" cy="8" r="7.4" fill="#f4f4f4" stroke="#a0a0a0" stroke-width="1"/>
<circle cx="8" cy="8" r="5.9" fill="url(#ig7)"/>
<rect x="7.1" y="3.6" width="1.8" height="1.7" fill="#fff"/><rect x="7.1" y="6.3" width="1.8" height="5.5" fill="#fff"/></svg>
</div>
<div style="left:766px;top:318px;width:1px;height:185px;background:#fff"></div>
<div style="left:767px;top:318px;width:1px;height:185px;background:#fff"></div>
<div style="left:768px;top:318px;width:16px;height:185px;background:#f0f0f0"></div>
<div style="left:768px;top:335px;width:15px;height:75px;background:#cdcdcd"></div>
<svg style="position:absolute;left:773px;top:324px" width="8" height="5" viewBox="0 0 8 5"><path d="M0 4.5 L3.75 0.3 L7.5 4.5Z" fill="#606060"/></svg>
<svg style="position:absolute;left:773px;top:492px" width="8" height="5" viewBox="0 0 8 5"><path d="M0 0.5 L3.75 4.7 L7.5 0.5Z" fill="#606060"/></svg>
<div style="left:702px;top:512px;width:85px;height:18px;background:#f5f5f5"></div>
<span id="t99" class="t" style="left:740.00px;transform:scaleX(1.0085);top:515px;color:#000">159 total</span>
<span id="t100" class="t" style="left:8.50px;transform:scaleX(0.9851);top:545.0px;color:#000;">Orient:</span>
<div style="left:49px;top:541px;width:99px;height:20px;background:#fff;border:1px solid #acacac;box-sizing:border-box"></div>
<span id="t101" class="t" style="left:52.50px;transform:scaleX(0.9973);top:546.0px;color:#000;">Landscape</span>
<svg style="position:absolute;left:135px;top:548px" width="8" height="7" viewBox="0 0 8 7"><path d="M0.9 1 L3.9 5 L6.9 1" stroke="#3a3a3a" stroke-width="2" fill="none" stroke-linejoin="miter"/></svg>
<div style="left:160px;top:544px;width:16px;height:16px;background:#fff;border:1px solid #6a6a6a;box-sizing:border-box"></div>
<span id="t102" class="t" style="left:178.50px;transform:scaleX(0.9028);top:546.0px;color:#000;">PDF Only</span>
<div style="left:470px;top:545px;width:16px;height:16px;background:#fff;border:1px solid #6a6a6a;box-sizing:border-box"></div>
<span id="t103" class="t" style="left:488.50px;transform:scaleX(0.9854);top:547.0px;color:#000;">Limit Record Count</span>
<div style="left:590px;top:545px;width:16px;height:16px;background:#fff;border:1px solid #6a6a6a;box-sizing:border-box"></div>
<span id="t104" class="t" style="left:608.50px;transform:scaleX(0.9376);top:547.0px;color:#000;">Render XLSX horiz.</span>
<div style="left:707px;top:545px;width:16px;height:16px;background:#fff;border:1px solid #6a6a6a;box-sizing:border-box"></div>
<span id="t105" class="t" style="left:726.50px;transform:scaleX(0.9223);top:547.0px;color:#000;">Use GreenBar</span>
<div style="left:7px;top:566px;width:76px;height:24px;background:#dadada;border:1px solid #d0d0d0;box-sizing:border-box"></div>
<span id="t106" class="t" style="left:32.34px;transform:scaleX(0.9658);top:572px;color:#a3a3a3">Save</span>
<div style="left:83px;top:566px;width:76px;height:24px;background:linear-gradient(#f0f0f0,#e5e5e5);border:1px solid #acacac;box-sizing:border-box"></div>
<span id="t107" class="t" style="left:95.86px;transform:scaleX(0.9590);top:572px;color:#000">Save New</span>
<div style="left:159px;top:566px;width:76px;height:24px;background:#dadada;border:1px solid #d0d0d0;box-sizing:border-box"></div>
<span id="t108" class="t" style="left:180.82px;transform:scaleX(0.9734);top:572px;color:#a3a3a3">Delete</span>
<div style="left:239px;top:566px;width:94px;height:24px;background:linear-gradient(#f0f0f0,#e5e5e5);border:1px solid #acacac;box-sizing:border-box"></div>
<span id="t109" class="t" style="left:266.60px;transform:scaleX(0.9901);top:572px;color:#000">Import<span style="letter-spacing:-1px">...</span></span>
<div style="left:333px;top:566px;width:94px;height:24px;background:#dadada;border:1px solid #d0d0d0;box-sizing:border-box"></div>
<span id="t110" class="t" style="left:360.66px;transform:scaleX(0.9706);top:572px;color:#a3a3a3">Export<span style="letter-spacing:-1px">...</span></span>
<div style="left:431px;top:566px;width:83px;height:24px;background:linear-gradient(#f0f0f0,#e5e5e5);border:1px solid #acacac;box-sizing:border-box"></div>
<span id="t111" class="t" style="left:445.63px;transform:scaleX(1.0089);top:572px;color:#000">Template<span style="letter-spacing:-1px">...</span></span>
<div style="left:518px;top:566px;width:94px;height:24px;background:linear-gradient(#f0f0f0,#e5e5e5);border:1px solid #acacac;box-sizing:border-box"></div>
<span id="t112" class="t" style="left:536.75px;transform:scaleX(0.9176);top:572px;color:#000">Show SQL<span style="letter-spacing:-1px">...</span></span>
<div style="left:612px;top:566px;width:94px;height:24px;background:linear-gradient(#f0f0f0,#e5e5e5);border:1px solid #acacac;box-sizing:border-box"></div>
<span id="t113" class="t" style="left:645.14px;transform:scaleX(1.0013);top:572px;color:#000">Test<span style="letter-spacing:-1px">...</span></span>
<div style="left:711px;top:566px;width:78px;height:24px;background:linear-gradient(#f0f0f0,#e5e5e5);border:1px solid #acacac;box-sizing:border-box"></div>
<span id="t114" class="t" style="left:740.92px;transform:scaleX(0.9472);top:572px;color:#000">Exit</span></div></body></html>
